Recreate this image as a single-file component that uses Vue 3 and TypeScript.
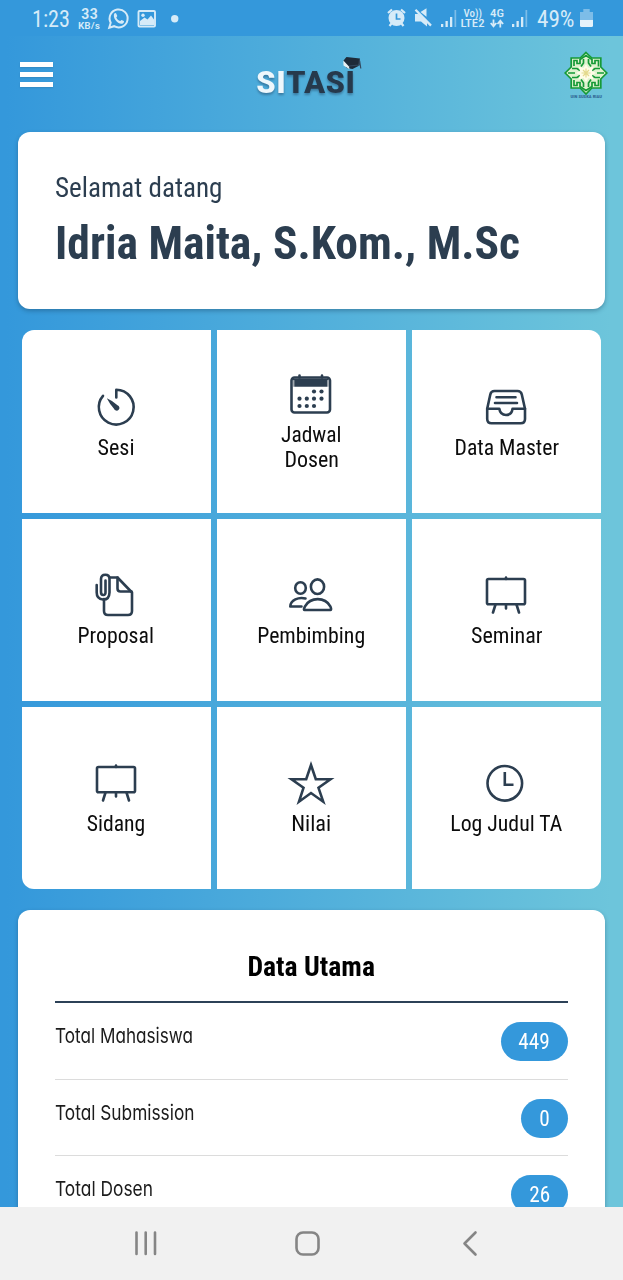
<script setup lang="ts">
import type { Directive } from 'vue'

interface MenuItem {
  icon: 'timer' | 'calendar' | 'inbox' | 'document' | 'people' | 'easel' | 'star' | 'clock'
  lines: { text: string; width: number }[]
}

interface Total {
  label: string
  labelWidth: number
  value: number
  valueWidth: number
  pill: string
}

const menu: MenuItem[] = [
  { icon: 'timer', lines: [{ text: 'Sesi', width: 37 }] },
  { icon: 'calendar', lines: [{ text: 'Jadwal', width: 60.5 }, { text: 'Dosen', width: 54.5 }] },
  { icon: 'inbox', lines: [{ text: 'Data Master', width: 104.5 }] },
  { icon: 'document', lines: [{ text: 'Proposal', width: 76.5 }] },
  { icon: 'people', lines: [{ text: 'Pembimbing', width: 108 }] },
  { icon: 'easel', lines: [{ text: 'Seminar', width: 71.5 }] },
  { icon: 'easel', lines: [{ text: 'Sidang', width: 58.5 }] },
  { icon: 'star', lines: [{ text: 'Nilai', width: 40 }] },
  { icon: 'clock', lines: [{ text: 'Log Judul TA', width: 112 }] },
]

const totals: Total[] = [
  { label: 'Total Mahasiswa', labelWidth: 138, value: 449, valueWidth: 31.5, pill: 'wide' },
  { label: 'Total Submission', labelWidth: 139.5, value: 0, valueWidth: 10.5, pill: 'narrow' },
  { label: 'Total Dosen', labelWidth: 98, value: 26, valueWidth: 21, pill: 'medium' },
]

// Condenses a line of text horizontally to the given width.
const vFit: Directive<HTMLElement, number> = {
  mounted(el, binding) {
    el.style.transform = `scaleX(${binding.value / el.getBoundingClientRect().width})`
  },
}
</script>

<template>
  <div class="screen">
    <header class="status">
      <svg class="status-left" viewBox="0 0 200 36" width="200" height="36">
        <text x="32" y="26.5" font-size="23.5" textLength="38" lengthAdjust="spacingAndGlyphs">1:23</text>
        <text x="81" y="19.2" font-size="14" font-weight="500" textLength="17" lengthAdjust="spacingAndGlyphs">33</text>
        <text x="78" y="29" font-size="9" font-weight="500" textLength="22" lengthAdjust="spacingAndGlyphs">KB/s</text>
        <path d="M109.2 27.8l1.5-5.1a9 9 0 1 1 3.4 3.5z" fill="none" stroke="#d6ebf8" stroke-width="2" />
        <path d="M114.3 13.6c.8-.8 1.600-.7 2 .1l.9 2c.2.600-.7 1.300-.9 1.700.8 1.700 2.100 2.900 3.800 3.600.5-.1 1-1.300 1.600-1.100l2.100 1c.7.500-.2 2.300-1.500 2.800-4.500 1-10.200-6-8-10.100z" fill="#d6ebf8" />
        <rect x="138.500" y="11" width="16.500" height="15.500" rx="1" fill="none" stroke="#d6ebf8" stroke-width="1.900" />
        <path d="M140 25v-4l4.500-3.500 3 2 3.500-4 3 4v5.500z" fill="#d6ebf8" />
        <circle cx="143" cy="15.300" r="1.700" fill="#d6ebf8" />
        <circle cx="174.700" cy="18.700" r="3.700" fill="#d6ebf8" />
      </svg>
      <svg class="status-right" viewBox="380 0 243 36" width="243" height="36">
        <circle cx="396.500" cy="18" r="8" fill="#d6ebf8" />
        <path d="M388 13l4-3.500M405 13l-4-3.500M391.500 23.500l-2 2.500M401.500 23.500l2 2.500" stroke="#d6ebf8" stroke-width="2.200" fill="none" />
        <path d="M396.500 13.500v5.500h4" stroke="#3498db" stroke-width="1.700" fill="none" />
        <path d="M415 14h3.500l8.500 8v4.500l-6-5h-6zM420.500 12l6-3.800v8.500z" fill="#d6ebf8" />
        <path d="M415.500 9.800l15.500 15.800" stroke="#d6ebf8" stroke-width="2.300" />
        <g fill="#d6ebf8">
          <path d="M441 24h2.300v3h-2.300zM445.500 21h2.300v6h-2.300zM450 17h2.300v10h-2.300z" />
          <path d="M454.500 10h1.700v17h-1.700z" opacity=".45" />
          <path d="M512 24h2.300v3h-2.300zM516.500 21h2.300v6h-2.300zM521 17h2.300v10h-2.300z" />
          <path d="M525.500 10h1.700v17h-1.700z" opacity=".45" />
        </g>
        <text x="463.500" y="16.500" font-size="10" font-weight="500" textLength="18.500" lengthAdjust="spacingAndGlyphs">Vo))</text>
        <text x="460.500" y="27.300" font-size="10.500" font-weight="500" textLength="24" lengthAdjust="spacingAndGlyphs">LTE2</text>
        <text x="490" y="17" font-size="11" font-weight="500" textLength="14" lengthAdjust="spacingAndGlyphs">4G</text>
        <path d="M493.500 19.500v6.500m-2.800-3l2.800 3.300 2.800-3.300M500.300 27.500v-6.500m-2.800 3l2.800-3.300 2.800 3.300" fill="none" stroke="#d6ebf8" stroke-width="1.800" />
        <text x="537" y="26.500" font-size="23.500" textLength="37.500" lengthAdjust="spacingAndGlyphs">49%</text>
        <path d="M580 12h3.300v-3h6.400v3h3.300v8h-13z" fill="#d6ebf8" opacity=".45" />
        <path d="M580 20h13v5.500q0 1.500-1.500 1.500h-10q-1.500 0-1.500-1.500z" fill="#e5f3fb" />
      </svg>
    </header>

    <div class="topbar">
      <button class="burger" aria-label="Menu"><i /><i /><i /></button>
      <svg class="brand" viewBox="250 50 116 52" width="116" height="52">
        <g class="brand-text">
          <text x="256" y="92.500" fill="#eef7fc" textLength="30" lengthAdjust="spacingAndGlyphs">SI</text>
          <text x="286" y="92.500" fill="#26394c" textLength="69" lengthAdjust="spacingAndGlyphs">TASI</text>
        </g>
        <path d="M343.500 60.500l3-3.500 13.500 1.500-1.500 7.500-6 3-6-1z" fill="#1e2b39" />
        <path d="M343.300 60.500l5.700 6 .5 2.700-6-3.700z" fill="#e8f1f4" />
        <path d="M349 66l10-1 .500-5 1.300 8.500" fill="none" stroke="#34495e" stroke-width="1.200" />
      </svg>
      <svg class="emblem" viewBox="564 50 44 50" width="44" height="50">
        <path d="M586 52.500l5.800 5.500h9v9l6 6-6 6v9h-9l-5.800 6-5.800-6h-9v-9l-6-6 6-6v-9h9z" fill="#dff2cf" stroke="#169a37" stroke-width="1.700" />
        <g fill="none" stroke="#169a37" stroke-width="1.700">
          <path d="M574 66v-5.500h3v3h3v-4l6-4 6 4v4h3v-3h3.500v6M574 80v5.500h3v-3h3v4l6 4 6-4v-4h3v3h3.500v-6" />
          <path d="M572 68.500h5l4.500 3M572 77.500h5l4.500-3M600 68.500h-5l-4.500 3M600 77.500h-5l-4.500-3M568 73h7M597 73h7" />
          <path d="M583.500 59v4l-2.500 3.500M588.500 59v4l2.500 3.500M583.500 87v-4l-2.500-3.500M588.500 87v-4l2.500-3.500" />
        </g>
        <path d="M586 64l2.500 4 5-1.500-1.500 4.500 4 2-4 2 1.500 4.500-5-1.500-2.500 4-2.500-4-5 1.500 1.500-4.500-4-2 4-2-1.500-4.500 5 1.500z" fill="#fffce8" />
        <path d="M586 68.500v9M581.500 73h9M583 70l6 6M589 70l-6 6" stroke="#e4d98d" stroke-width="1.200" />
        <text x="570.500" y="98.300" font-size="4.200" font-weight="700" fill="#2d6291" textLength="31.500" lengthAdjust="spacingAndGlyphs">UIN SUSKA RIAU</text>
      </svg>
    </div>

    <section class="card welcome">
      <span v-fit="167.5" class="greeting">Selamat datang</span>
      <span v-fit="465" class="name">Idria Maita, S.Kom., M.Sc</span>
    </section>

    <nav class="menu">
      <a v-for="(item, i) in menu" :key="i" class="tile">
        <svg class="icon" viewBox="0 0 52 51" width="52" height="51">
          <g v-if="item.icon === 'timer'">
            <path d="M26.300 13.500V5.700A17.400 17.400 0 1 1 13 11.800" />
            <path class="solid" d="M16.800 14.200Q22 16.300 27.500 21.200A2.800 2.800 0 1 1 24 24.800Q19.500 19.500 16.800 14.200z" />
          </g>
          <g v-else-if="item.icon === 'calendar'">
            <rect x="6.500" y="6.500" width="38.500" height="35" rx="3" />
            <path class="solid" d="M8 7.500h35.500v8.300H8z" />
            <path d="M14.500 4.500v2M37 4.500v2" />
            <path class="thin" d="M8.800 16V9.500M42.900 16V9.500" />
            <g class="dots">
              <circle cx="29" cy="20.500" r="2.100" /><circle cx="36.500" cy="20.500" r="2.100" />
              <circle cx="14.500" cy="27.700" r="2.100" /><circle cx="21.800" cy="27.700" r="2.100" /><circle cx="29" cy="27.700" r="2.100" /><circle cx="36.500" cy="27.700" r="2.100" />
              <circle cx="14.500" cy="35" r="2.100" /><circle cx="21.800" cy="35" r="2.100" /><circle cx="29" cy="35" r="2.100" />
            </g>
          </g>
          <g v-else-if="item.icon === 'inbox'">
            <path d="M7.200 24.800L10.300 10.500Q11 7 14.500 7H37.500Q41 7 41.800 10.500L45 24.800V35Q45 39.300 40.700 39.300H11.500Q7.200 39.300 7.200 35z" />
            <path d="M7.200 24.800H19.300Q20.300 31 26 31T32.500 24.800H45M16.500 13.200H35.500M15 19H37" />
          </g>
          <g v-else-if="item.icon === 'document'">
            <path d="M14 27V39Q14 43 18 43H38Q42 43 42 39V20.500L27.500 5.500H20" />
            <path d="M27.500 5.500V16.500Q27.500 19.500 30.500 19.500H41.500" />
            <path d="M6.700 13V20.500Q6.700 27 13 27.500T19.500 20.500V7Q19.500 2.700 15.300 2.700T11 7V20Q11 23 13.300 23T15.500 20V8.500" />
          </g>
          <g v-else-if="item.icon === 'people'">
            <ellipse cx="15.500" cy="16" rx="5.300" ry="5.700" />
            <ellipse cx="32.500" cy="14.700" rx="6.600" ry="7.300" />
            <path d="M20.500 26.500C13.500 24.800 5.500 28 5.300 34.500H16.500" />
            <path d="M19.500 38C18.500 38 19.200 35.800 20 34.300C25.500 24.700 40 24.700 45.300 34.300C46 35.800 46.500 38 45.500 38z" />
          </g>
          <g v-else-if="item.icon === 'easel'">
            <rect x="7" y="7" width="38" height="25.300" rx="1.500" />
            <path d="M26 5.500V7M26 32.500V36.500M15.500 32.500L13 40.500M36.500 32.500L39 40.500" />
          </g>
          <path v-else-if="item.icon === 'star'" class="mitre" d="M26 5L30.800 19.200H45.500L33.500 27.800L38.200 41.700L26 33L14 41.700L18.500 27.800L6.500 19.200H21.200z" />
          <g v-else>
            <circle cx="24.800" cy="23.300" r="17.300" />
            <path class="mitre" d="M24.800 12V24.700H33.500" />
          </g>
        </svg>
        <span v-for="line in item.lines" :key="line.text" v-fit="line.width" class="label">{{ line.text }}</span>
      </a>
    </nav>

    <section class="card summary">
      <h2><span v-fit="127.5">Data Utama</span></h2>
      <div v-for="row in totals" :key="row.label" class="row">
        <span v-fit="row.labelWidth" class="row-label">{{ row.label }}</span>
        <span class="pill" :class="row.pill"><span v-fit="row.valueWidth" class="value">{{ row.value }}</span></span>
      </div>
    </section>

    <footer class="navbar">
      <svg viewBox="0 0 623 73" width="623" height="73">
        <path d="M136.500 25.500v21.500M145.700 25.500v21.500M155 25.500v21.500" />
        <rect x="296.500" y="25.500" width="22" height="22" rx="6.500" />
        <path d="M475.500 25.500L464.500 36.500L475.500 47.500" />
      </svg>
    </footer>
  </div>
</template>

<style>
body {
  margin: 0;
}
</style>

<style scoped>
.screen {
  display: flex;
  flex-direction: column;
  width: 623px;
  height: 1280px;
  overflow: hidden;
  background: linear-gradient(90deg, #3498db 1%, #6dc5db 98%);
  font-family: "Roboto Condensed", Roboto, "Liberation Sans", sans-serif;
  font-stretch: 75%;
}

.status {
  display: flex;
  justify-content: space-between;
  flex: none;
  height: 36px;
  background: #3498db;
}

.status text {
  fill: #d6ebf8;
}

.topbar {
  display: flex;
  flex: none;
  justify-content: space-between;
  height: 95.5px;
  padding: 14px 15px 0 20px;
  box-sizing: border-box;
}

.burger {
  display: flex;
  flex-direction: column;
  gap: 5px;
  width: 33px;
  margin: 12px 0 0;
  padding: 0;
  border: 0;
  background: none;
}

.burger i {
  height: 5px;
  background: #fff;
  box-shadow: 0 1px 2px rgb(0 0 0 / 12%);
}

.brand {
  margin-left: -2px;
}

.brand-text {
  font-size: 31px;
  font-stretch: normal;
  font-weight: 700;
  filter: drop-shadow(0 2px 1px rgb(30 60 90 / 45%));
}

.card {
  flex: none;
  width: 586.500px;
  margin-left: 18px;
  box-sizing: border-box;
  border-radius: 12px;
  background: #fff;
  box-shadow: 0 2px 4px rgb(20 60 90 / 38%);
}

.welcome {
  display: flex;
  flex-direction: column;
  align-items: flex-start;
  height: 177px;
  padding: 40px 36.500px 0;
  color: #2c3e50;
}

.greeting,
.name {
  transform-origin: left;
  white-space: nowrap;
}

.greeting {
  font-size: 27px;
  line-height: 32px;
}

.name {
  margin-top: 13.500px;
  font-size: 45.500px;
  font-weight: 700;
  line-height: 54px;
}

.menu {
  display: grid;
  flex: none;
  grid-template-columns: repeat(3, 1fr);
  grid-auto-rows: 182.200px;
  gap: 6px;
  width: 579.500px;
  margin: 21.900px 0 0 21.500px;
  border-radius: 12px;
  overflow: hidden;
}

.tile {
  display: flex;
  flex-direction: column;
  align-items: center;
  justify-content: center;
  padding-top: 1px;
  background: #fff;
  color: #0c0c0c;
}

.icon,
.navbar svg {
  fill: none;
  stroke: #2c3e50;
  stroke-width: 2.600;
  stroke-linecap: round;
  stroke-linejoin: round;
}

.icon .solid,
.icon .dots {
  fill: #2c3e50;
  stroke: none;
}

.icon .thin {
  stroke: #fff;
  stroke-width: 0.800;
}

.icon .mitre {
  stroke-linejoin: miter;
  stroke-linecap: butt;
}

.label {
  font-size: 21.500px;
  line-height: 25px;
  white-space: nowrap;
}

.summary {
  height: 400px;
  margin-top: 21.100px;
  padding: 0 36.500px;
}

h2 {
  display: flex;
  justify-content: center;
  height: 93px;
  margin: 0;
  padding-top: 40px;
  box-sizing: border-box;
  border-bottom: 2px solid #2c4157;
  color: #000;
  font-size: 27px;
  line-height: 34px;
}

.row {
  display: flex;
  justify-content: space-between;
  align-items: flex-start;
  height: 76.700px;
  padding-top: 18.900px;
  box-sizing: border-box;
  border-bottom: 1.500px solid #dcdcdc;
}

.row-label {
  color: #1c1c1c;
  font-family: Inter, "Liberation Sans", sans-serif;
  font-feature-settings: "cv11";
  font-size: 20.500px;
  font-stretch: normal;
  line-height: 28px;
  transform-origin: left;
  white-space: nowrap;
}

.pill {
  display: flex;
  align-items: center;
  justify-content: flex-end;
  height: 39px;
  padding-right: 18px;
  box-sizing: border-box;
  border-radius: 20px;
  background: #3498db;
  color: #fff;
  font-size: 21.500px;
}

.pill.wide {
  width: 67px;
}

.pill.medium {
  width: 57px;
}

.pill.narrow {
  width: 47px;
}

.value {
  transform-origin: right;
}

.navbar {
  position: fixed;
  bottom: 0;
  left: 0;
  height: 73px;
  background: #f1f1f1;
}

.navbar svg {
  display: block;
  stroke: #858585;
}
</style>
